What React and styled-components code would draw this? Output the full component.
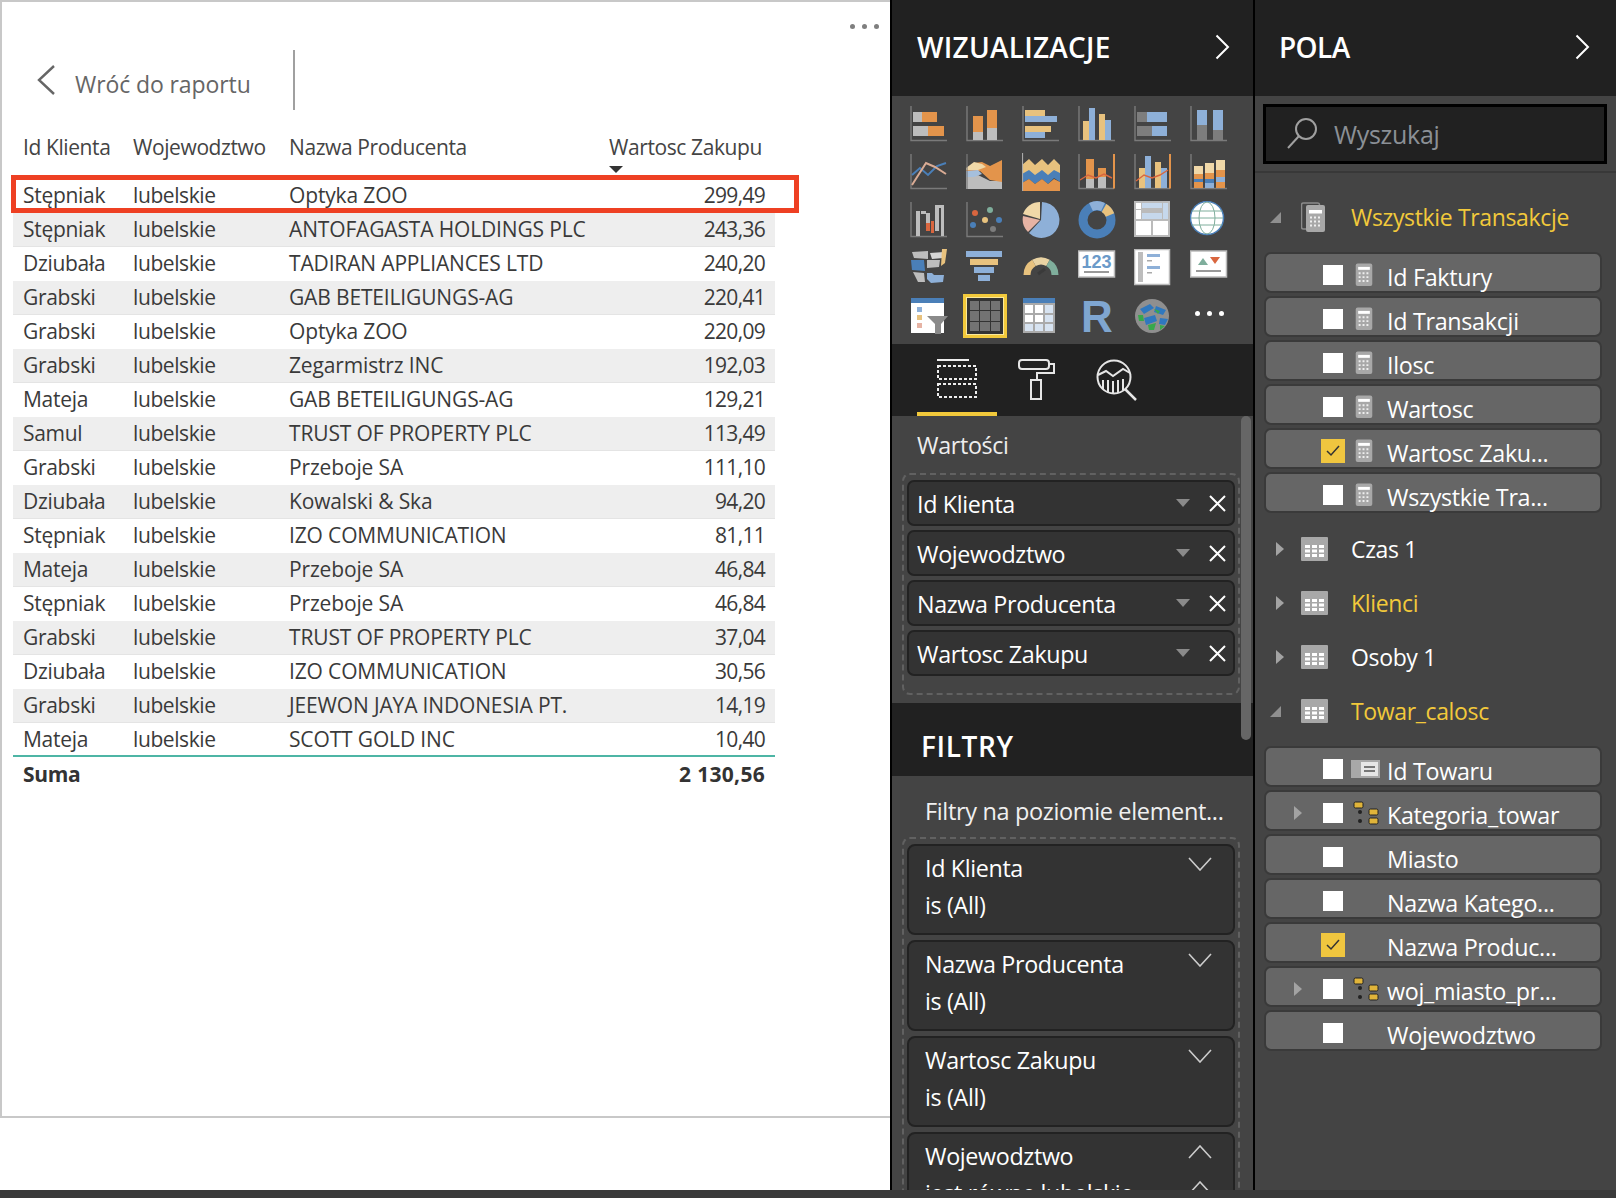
import React from 'react'
import styled, { createGlobalStyle } from 'styled-components'

const GlobalStyle = createGlobalStyle`
  html, body { margin: 0; padding: 0; background: #fff; }
  * { box-sizing: border-box; }
`

const FONT = `"Open Sans", "Noto Sans", sans-serif`
const OR = '#e3944b', LG = '#bdbdbd', BL = '#8eb0d8', TN = '#e8c27e', DB = '#4a7fb8', DG = '#7d7d7d', AX = '#7a7a7a', RD = '#d9663f', GR = '#7fae9c', PK = '#e6b3a4', WH = '#fff'

const rows = [
  ['Stępniak', 'Optyka ZOO', '299,49'],
  ['Stępniak', 'ANTOFAGASTA HOLDINGS PLC', '243,36'],
  ['Dziubała', 'TADIRAN APPLIANCES LTD', '240,20'],
  ['Grabski', 'GAB BETEILIGUNGS-AG', '220,41'],
  ['Grabski', 'Optyka ZOO', '220,09'],
  ['Grabski', 'Zegarmistrz INC', '192,03'],
  ['Mateja', 'GAB BETEILIGUNGS-AG', '129,21'],
  ['Samul', 'TRUST OF PROPERTY PLC', '113,49'],
  ['Grabski', 'Przeboje SA', '111,10'],
  ['Dziubała', 'Kowalski & Ska', '94,20'],
  ['Stępniak', 'IZO COMMUNICATION', '81,11'],
  ['Mateja', 'Przeboje SA', '46,84'],
  ['Stępniak', 'Przeboje SA', '46,84'],
  ['Grabski', 'TRUST OF PROPERTY PLC', '37,04'],
  ['Dziubała', 'IZO COMMUNICATION', '30,56'],
  ['Grabski', 'JEEWON JAYA INDONESIA PT.', '14,19'],
  ['Mateja', 'SCOTT GOLD INC', '10,40'],
]

const Page = styled.div`
  width: 1616px;
  height: 1198px;
  overflow: hidden;
  display: flex;
  flex-direction: column;
  font-family: ${FONT};
  background: #fff;
`
const Main = styled.div`
  flex: 1;
  display: flex;
  min-height: 0;
`
const BottomStrip = styled.div`
  height: 8px;
  background: #3a3a3a;
`

/* report */
const Report = styled.div`
  width: 890px;
  background: #fff;
`
const Canvas = styled.div`
  height: 1118px;
  border-top: 2px solid #c8c8c8;
  border-left: 2px solid #c8c8c8;
  border-bottom: 2px solid #c8c8c8;
`
const Dots = styled.div`
  height: 48px;
  display: flex;
  justify-content: flex-end;
  align-items: center;
  gap: 7px;
  padding-right: 11px;
`
const Dot = styled.span`
  width: 5px;
  height: 5px;
  border-radius: 50%;
  background: ${p => p.$color || '#7f7f7f'};
`
const BackRow = styled.div`
  height: 60px;
  display: flex;
  align-items: center;
  padding-left: 35px;
`
const BackLabel = styled.div`
  width: 218px;
  margin-left: 20px;
  font-size: 23px;
  letter-spacing: -0.1px;
  color: #666;
  padding-top: 8px;
`
const BackDivider = styled.div`
  width: 2px;
  height: 60px;
  background: #a0a0a0;
`
const TableWrap = styled.div`
  position: relative;
  width: 762px;
  margin: 18px 0 0 11px;
  font-size: 21px;
  letter-spacing: -0.3px;
  color: #3a3a3a;
`
const cols = `110px 156px 1fr 120px`
const HeadRow = styled.div`
  height: 51px;
  display: grid;
  grid-template-columns: 110px 156px 1fr 176px;
  padding-top: 3px;
  color: #444;
  letter-spacing: -0.4px;
`
const HeadCell = styled.div`
  padding-left: 10px;
  line-height: 32px;
`
const SortCaret = styled.div`
  width: 0;
  height: 0;
  margin-top: 3px;
  border-left: 7px solid transparent;
  border-right: 7px solid transparent;
  border-top: 7px solid #333;
`
const Row = styled.div`
  height: 33px;
  margin-bottom: 1px;
  padding-bottom: 2px;
  display: grid;
  grid-template-columns: ${cols};
  align-items: center;
  background: ${p => (p.$alt ? '#eeeeee' : '#fff')};
  box-shadow: 0 1px 0 ${p => (p.$alt ? '#e4e4e4' : '#fff')};
`
const TotalRow = styled(Row)`
  margin: -2px 0 0;
  height: 38px;
  position: relative;
  border-top: 2px solid #4db5a5;
  box-shadow: none;
  font-weight: 700;
  font-size: 21px;
  color: #333;
`
const Cell = styled.div`
  padding: 0 10px;
  white-space: nowrap;
  letter-spacing: ${p => p.$spacing ?? -0.3}px;
  text-align: ${p => (p.$right ? 'right' : 'left')};
`
const Highlight = styled.div`
  position: absolute;
  left: -2px;
  top: 47px;
  width: 788px;
  height: 38px;
  border: 5px solid #ee4023;
`

/* shared pane parts */
const Pane = styled.div`
  position: relative;
  overflow: hidden;
  background: #444;
  color: #fff;
  width: ${p => p.$w}px;
  border-left: ${p => (p.$border ? '2px solid #000' : '0')};
  border-right: ${p => (p.$border ? '2px solid #000' : '0')};
`
const PaneHeader = styled.div`
  height: 96px;
  padding-bottom: 3px;
  background: #212121;
  display: flex;
  align-items: center;
  justify-content: space-between;
  font-size: 28px;
  font-weight: 600;
  letter-spacing: ${p => p.$spacing}px;
  padding-left: ${p => p.$left}px;
  padding-right: ${p => p.$right}px;
`

/* visualizations */
const VizGrid = styled.div`
  height: 248px;
  padding: 9px 0 0 18px;
  display: grid;
  grid-template-columns: repeat(6, 56px);
  grid-auto-rows: 48px;
  align-items: start;
`
const Selected = styled.div`
  width: 44px;
  height: 44px;
  margin: -3px 0 0 -3px;
  border: 3px solid #f2c93b;
  outline: 1px solid #fbe99b;
  outline-offset: -4px;
  background: #333;
  padding: 4px;
  display: grid;
  grid-template-columns: repeat(3, 1fr);
  gap: 1px;
`
const SelectedCell = styled.div`
  background: #737373;
`
const MoreDots = styled.div`
  width: 38px;
  height: 32px;
  display: flex;
  align-items: center;
  justify-content: center;
  gap: 7px;
`
const Tabs = styled.div`
  height: 72px;
  background: #212121;
  display: flex;
  padding-left: 25px;
`
const Tab = styled.div`
  width: 80px;
  height: 72px;
  display: flex;
  justify-content: center;
  padding-top: 15px;
  border-bottom: 4px solid ${p => (p.$active ? '#f2c93b' : 'transparent')};
`
const Section = styled.div`
  height: 287px;
  padding-top: 13px;
`
const WellLabel = styled.div`
  margin-left: 25px;
  font-size: 23.3px;
  line-height: 32px;
  letter-spacing: -0.35px;
  color: #eee;
`
const Well = styled.div`
  width: 338px;
  margin: ${p => p.$top}px 0 0 10px;
  padding: 5px 3px 0;
  height: ${p => (p.$h ? `${p.$h}px` : 'auto')};
  border: 2px dashed #616161;
  border-radius: 8px;
`
const Pill = styled.div`
  height: 46px;
  margin-bottom: 4px;
  display: flex;
  align-items: center;
  padding: 0 7px 0 8px;
  background: #333;
  border: 2px solid #222;
  border-radius: 7px;
  font-size: 23.3px;
  letter-spacing: -0.35px;
`
const PillText = styled.span`
  flex: 1;
  padding-top: 2px;
`
const PillCaret = styled.span`
  width: 0;
  height: 0;
  margin-right: 19px;
  border-left: 7px solid transparent;
  border-right: 7px solid transparent;
  border-top: 8px solid #8a8a8a;
`
const FilterHeader = styled.div`
  height: 73px;
  background: #212121;
  display: flex;
  align-items: center;
  padding: 12px 0 0 29px;
  font-size: 28px;
  font-weight: 600;
  letter-spacing: 0.6px;
`
const FilterLevel = styled.div`
  margin: 19px 0 0 33px;
  font-size: 23.5px;
  line-height: 32px;
  letter-spacing: -0.35px;
  color: #f0f0f0;
  white-space: nowrap;
`
const FilterCard = styled.div`
  position: relative;
  height: ${p => p.$h || 91}px;
  margin-bottom: 5px;
  padding: 4px 0 0 16px;
  background: #333;
  border: 2px solid #222;
  border-radius: 8px;
  font-size: 23.3px;
  letter-spacing: -0.35px;
  line-height: 37px;
`
const CardChevron = styled.svg`
  position: absolute;
  right: 21px;
  top: ${p => p.$top}px;
`
const Scrollbar = styled.div`
  position: absolute;
  left: 349px;
  top: 416px;
  width: 10px;
  height: 324px;
  border-radius: 5px;
  background: #666;
`

/* fields */
const SearchBox = styled.div`
  width: 344px;
  height: 60px;
  margin: 8px 0 0 8px;
  display: flex;
  align-items: center;
  gap: 17px;
  padding-left: 21px;
  background: #212121;
  border: 3px solid #000;
  color: #8b9096;
  font-size: 25px;
  letter-spacing: -0.3px;
`
const PaneDivider = styled.div`
  height: 2px;
  margin-top: 7px;
  background: #383838;
`
const Tree = styled.div`
  padding-top: 17px;
`
const GroupHead = styled.div`
  height: 54px;
  display: grid;
  grid-template-columns: 31px 50px 1fr;
  align-items: center;
  padding-left: 15px;
  font-size: 23px;
  letter-spacing: -0.35px;
  color: ${p => (p.$active ? '#f2c93b' : '#fff')};
`
const FieldList = styled.div`
  margin: 8px 0 9px 9px;
`
const FieldRow = styled.div`
  width: 338px;
  height: 41px;
  margin-bottom: 3px;
  padding-top: 4px;
  display: grid;
  grid-template-columns: 57px 20px 44px 1fr;
  align-items: center;
  background: #666;
  border: 2px solid #3a3a3a;
  border-radius: 7px;
  font-size: 23.3px;
  letter-spacing: -0.3px;
`
const CheckSlot = styled.div`
  width: ${p => (p.$on ? 24 : 20)}px;
  height: ${p => (p.$on ? 24 : 20)}px;
  margin-left: ${p => (p.$on ? -2 : 0)}px;
  display: flex;
  align-items: center;
  justify-content: center;
  background: ${p => (p.$on ? '#f0c63f' : '#fff')};
`
const RowTriangle = styled.span`
  justify-self: end;
  margin-right: 21px;
  width: 0;
  height: 0;
  border-top: 7px solid transparent;
  border-bottom: 7px solid transparent;
  border-left: 8px solid #a3a3a3;
`
const FieldIconSlot = styled.div`
  display: flex;
  align-items: center;
  padding-left: ${p => p.$pad}px;
`
const FieldText = styled.span`
  align-self: start;
  padding-top: 4px;
  height: 33px;
  line-height: 30px;
  white-space: nowrap;
`
const HeadTriangle = styled.span`
  width: 0;
  height: 0;
  ${p => (p.$open
    ? `border-bottom: 11px solid #8f8f8f; border-left: 11px solid transparent;`
    : `margin-left: 6px; border-top: 7px solid transparent; border-bottom: 7px solid transparent; border-left: 8px solid #a3a3a3;`)}
`

/* bar and area icons described as data: [x, y, w, h, colour] */
const Axis = () => <path d="M1 1V35.5H37" fill="none" stroke={AX} strokeWidth="1.4" />
const Bars = ({ list }) => list.map((b, i) => <rect key={i} x={b[0]} y={b[1]} width={b[2]} height={b[3]} fill={b[4]} />)
const Icon = ({ children, w = 38, h = 38 }) => <svg width={w} height={h} viewBox={`0 0 ${w} ${h}`}>{children}</svg>

const chart = list => <Icon><Axis /><Bars list={list} /></Icon>

const vizIcons = [
  chart([[3, 7, 9, 10, LG], [12, 7, 15, 10, OR], [3, 21, 15, 10, LG], [18, 21, 16, 10, OR]]),
  chart([[7, 11, 10, 16, OR], [7, 27, 10, 8, LG], [21, 5, 10, 18, OR], [21, 23, 10, 12, LG]]),
  chart([[3, 5, 20, 6, TN], [3, 11, 32, 6, BL], [3, 21, 26, 6, TN], [3, 27, 20, 6, BL]]),
  chart([[5, 16, 6, 19, TN], [11, 3, 6, 32, BL], [21, 9, 6, 26, TN], [27, 15, 6, 20, BL]]),
  chart([[3, 7, 10, 10, DG], [13, 7, 20, 10, BL], [3, 21, 15, 10, DG], [18, 21, 15, 10, BL]]),
  chart([[7, 5, 10, 15, BL], [7, 20, 10, 15, DG], [23, 5, 10, 20, BL], [23, 25, 10, 10, DG]]),

  <Icon>
    <Axis />
    <path d="M2 22L10 15L18 22L27 13L36 10" fill="none" stroke={DB} strokeWidth="2" />
    <path d="M2 32L16 10L25 14L36 21" fill="none" stroke="#d9ab94" strokeWidth="2" />
  </Icon>,
  <Icon>
    <path d="M0 36V24L12 22L24 28L36 28V36Z" fill={LG} />
    <path d="M0 16L8 10L16 9L24 13L36 7V29L24 27L14 18L0 18Z" fill={OR} />
    <path d="M0 15L8 9L16 11L20 14L12 17L0 17Z" fill="#f0d8a8" />
    <path d="M0 18L12 17L16 21L8 24L0 24Z" fill="#a5bfdc" />
    <path d="M1 1V36" stroke={AX} strokeWidth="1.2" />
  </Icon>,
  <Icon>
    <path d="M0 12L7 6L13 12L20 6L26 12L32 6L38 12V24L32 20L26 25L20 20L13 26L7 20L0 24Z" fill={TN} />
    <path d="M0 21L7 17L13 22L20 17L26 22L32 17L38 20V29L32 25L26 31L20 26L13 31L7 26L0 30Z" fill={DB} />
    <path d="M0 30L7 26L13 31L20 26L26 31L32 26L38 29V38H0Z" fill={OR} />
    <path d="M0.5 0V38" stroke="#aaa" strokeWidth="1.2" />
  </Icon>,
  <Icon>
    <path d="M1 1V35.5H36" fill="none" stroke={AX} strokeWidth="1.4" />
    <path d="M36 1V35.5" stroke={OR} strokeWidth="2" />
    <Bars list={[[8, 6, 8, 20, OR], [8, 26, 8, 9, LG], [20, 15, 8, 9, OR], [20, 24, 8, 11, LG]]} />
    <path d="M2 27L10 22L18 25L26 21L34 25" fill="none" stroke={RD} strokeWidth="1.4" />
  </Icon>,
  <Icon>
    <path d="M1 1V35.5H36" fill="none" stroke={AX} strokeWidth="1.4" />
    <path d="M36 1V35.5" stroke={OR} strokeWidth="2" />
    <Bars list={[[5, 15, 6, 20, TN], [11, 3, 6, 32, BL], [21, 9, 6, 26, TN], [27, 15, 6, 20, BL]]} />
    <path d="M2 28L10 22L18 25L26 22L34 17" fill="none" stroke={RD} strokeWidth="1.4" />
  </Icon>,
  <Icon>
    <path d="M1 1V35.5H37" fill="none" stroke={AX} strokeWidth="1.4" />
    <Bars list={[[4, 13, 9, 8, '#f0d8a8'], [15, 10, 9, 10, '#f0d8a8'], [26, 7, 9, 10, '#f0d8a8'], [4, 21, 9, 5, OR], [15, 20, 9, 6, OR], [26, 17, 9, 7, OR], [4, 26, 9, 3, DB], [15, 26, 9, 4, DB], [26, 24, 9, 5, BL], [4, 29, 9, 6, OR], [15, 30, 9, 5, BL], [26, 29, 9, 6, OR]]} />
  </Icon>,

  <Icon>
    <Axis />
    <Bars list={[[6, 10, 4, 25, LG], [11, 10, 5, 3, LG], [16, 12, 4, 10, LG], [16, 22, 4, 8, RD], [21, 20, 3, 12, RD], [25, 4, 4, 26, LG], [29, 4, 4, 3, LG], [31, 4, 3, 31, LG]]} />
  </Icon>,
  <Icon>
    <Axis />
    <circle cx="9" cy="12" r="3" fill={RD} />
    <circle cx="24" cy="9" r="3" fill={GR} />
    <circle cx="19" cy="19" r="3" fill={TN} />
    <circle cx="7" cy="24" r="3" fill={DB} />
    <circle cx="33" cy="19" r="3" fill={DB} />
    <circle cx="27" cy="28" r="3" fill={DG} />
  </Icon>,
  <Icon>
    <path d="M19 19L20 1A18 18 0 1 1 7 32Z" fill={BL} />
    <path d="M18 18L1 13A18 18 0 0 1 18 1Z" fill="#f0d8a8" />
    <path d="M18 19L6 31A18 18 0 0 1 1 15Z" fill={PK} />
  </Icon>,
  <Icon>
    <circle cx="19" cy="19" r="14" fill="none" stroke={DB} strokeWidth="9" />
    <path d="M13 6A14 14 0 0 1 25 6" fill="none" stroke={BL} strokeWidth="9" />
    <path d="M26 7A14 14 0 0 1 32 14" fill="none" stroke={TN} strokeWidth="9" />
  </Icon>,
  <Icon>
    <rect width="36" height="36" fill="#bbb" />
    <Bars list={[[2, 2, 5, 6, WH], [8, 2, 20, 5, '#c6d8ec'], [29, 2, 5, 16, '#c6d8ec'], [2, 9, 5, 9, WH], [8, 12, 20, 6, '#c6d8ec'], [2, 20, 15, 14, WH], [19, 20, 15, 14, WH]]} />
  </Icon>,
  <Icon>
    <circle cx="17" cy="17" r="16.5" fill="#fff" stroke={DB} strokeWidth="1.5" />
    <ellipse cx="17" cy="17" rx="8" ry="16" fill="none" stroke={GR} />
    <path d="M2 10H32M1 17H33M2 24H32" stroke={GR} />
  </Icon>,

  <Icon>
    <path d="M2 3L18 2L18 10L4 9Z" fill={LG} />
    <path d="M20 4L34 3L33 9L22 10Z" fill="#d5d5d5" />
    <path d="M32 0H37L35 14L31 17Z" fill={TN} />
    <path d="M1 11H14L15 22L2 21Z" fill={DB} />
    <path d="M17 11H30L29 18L17 19Z" fill={LG} />
    <path d="M3 23L14 24L15 33L8 33Z" fill={LG} />
    <path d="M17 24H22L24 26H34L33 33L21 34L17 30Z" fill={BL} />
  </Icon>,
  <Icon>
    <Bars list={[[0, 2, 36, 6, BL], [4, 10, 28, 6, TN], [8, 18, 20, 6, BL], [12, 26, 12, 6, BL]]} />
  </Icon>,
  <Icon>
    <g fill="none" strokeWidth="7">
      <path d="M5 26A14 14 0 0 1 12 13.9" stroke={TN} />
      <path d="M12 13.9A14 14 0 0 1 26 13.9" stroke="#e9d3a3" />
      <path d="M26 13.9A14 14 0 0 1 33 26" stroke={GR} />
    </g>
    <path d="M16 25L23 20" stroke="#3a3a3a" strokeWidth="3" />
  </Icon>,
  <Icon>
    <rect x="0.5" y="2" width="36" height="26" fill="#fff" stroke="#bbb" strokeWidth="1.5" />
    <text x="18.5" y="19" textAnchor="middle" fontSize="18" fontWeight="700" fontFamily="Liberation Sans" fill="#6a9ac9">123</text>
    <rect x="6" y="22" width="25" height="2" fill="#999" />
  </Icon>,
  <Icon>
    <rect x="0.5" y="0.5" width="35" height="35" fill="#fff" stroke="#bbb" strokeWidth="1.5" />
    <Bars list={[[4, 3, 5, 30, LG], [13, 5, 13, 3, BL], [13, 11, 5, 1.5, '#aaa'], [13, 17, 13, 3, BL], [13, 23, 5, 1.5, '#aaa']]} />
  </Icon>,
  <Icon>
    <rect x="0.5" y="2" width="36" height="26" fill="#fff" stroke="#bbb" strokeWidth="1.5" />
    <path d="M8 16L13 9L18 16Z" fill={GR} />
    <path d="M20 8H30L25 15Z" fill={RD} />
    <rect x="6" y="21" width="25" height="2" fill="#999" />
  </Icon>,

  <Icon>
    <rect x="1" y="1" width="33" height="35" fill="#fff" />
    <rect x="1" y="1" width="33" height="5" fill={DB} />
    <Bars list={[[7, 10, 5, 5, BL], [7, 18, 5, 5, TN], [7, 26, 5, 5, PK]]} />
    <path d="M17 19H38L31 27V37H25V27Z" fill="#8a8a8a" />
  </Icon>,
  <Selected>{Array.from({ length: 9 }, (_, i) => <SelectedCell key={i} />)}</Selected>,
  <Icon>
    <rect x="1" y="1" width="32" height="35" fill="#aaa" />
    <rect x="1" y="1" width="32" height="5" fill={DB} />
    <Bars list={[[3, 8, 8, 8, WH], [13, 8, 8, 8, WH], [23, 8, 8, 8, '#d7e3f1'], [3, 18, 8, 7, WH], [13, 18, 8, 7, WH], [23, 18, 8, 7, '#d7e3f1'], [3, 27, 8, 7, '#d7e3f1'], [13, 27, 8, 7, '#d7e3f1'], [23, 27, 8, 7, '#d7e3f1']]} />
  </Icon>,
  <Icon>
    <text x="19" y="35" textAnchor="middle" fontSize="44" fontWeight="700" fontFamily="Liberation Sans" fill="#7fa6d0">R</text>
  </Icon>,
  <Icon>
    <circle cx="18" cy="19" r="17" fill="#8f8f8f" />
    <path d="M6 12L16 7L20 11L10 17ZM22 9L32 13L29 18L20 15ZM10 21L21 18L23 24L12 28ZM26 21L34 22L31 28L25 27Z" fill="#2f78bf" />
    <path d="M4 18L9 18L10 24L5 24ZM20 12L26 14L24 17ZM14 28L22 26L20 33L15 33ZM26 28L31 29L26 33Z" fill="#37a84b" />
  </Icon>,
  <MoreDots><Dot $color="#fff" /><Dot $color="#fff" /><Dot $color="#fff" /></MoreDots>,
]

const Chevron = () => (
  <svg width="15" height="26" viewBox="0 0 15 26"><path d="M1.5 1.5L13 13L1.5 24.5" fill="none" stroke="#fff" strokeWidth="2" /></svg>
)
const Close = () => (
  <svg width="17" height="17" viewBox="0 0 17 17"><path d="M1 1L16 16M16 1L1 16" stroke="#fff" strokeWidth="2" /></svg>
)
const Calc = ({ size = 18 }) => (
  <svg width={size} height={size * 1.3} viewBox="0 0 18 24">
    <rect x="0.5" y="0.5" width="17" height="23" rx="2" fill="#a8a8a8" />
    <rect x="3" y="4" width="12" height="3" fill="#fff" />
    <path d="M3.5 10.5H14.5M3.5 14.5H14.5M3.5 18.5H14.5" stroke="#eee" strokeWidth="2" strokeDasharray="2 2" />
  </svg>
)
const CalcStack = () => (
  <svg width="25" height="30" viewBox="0 0 25 30">
    <rect x="0.5" y="1" width="18" height="26" rx="2" fill="none" stroke="#8a8a8a" strokeWidth="1.5" />
    <rect x="5" y="3" width="19" height="27" rx="2" fill="#a8a8a8" />
    <rect x="8" y="8" width="13" height="3.5" fill="#fff" />
    <path d="M9 15.5H20M9 19.5H20M9 23.5H20" stroke="#eee" strokeWidth="2" strokeDasharray="2 2" />
  </svg>
)
const TableIcon = () => (
  <svg width="27" height="24" viewBox="0 0 27 24">
    <rect width="27" height="24" rx="1" fill="#a8a8a8" />
    <path d="M4 9.5H23M4 14H23M4 18.5H23" stroke="#fff" strokeWidth="3" strokeDasharray="5 2" />
  </svg>
)
const IdIcon = () => (
  <svg width="29" height="18" viewBox="0 0 29 18">
    <rect width="29" height="18" fill="#a8a8a8" />
    <rect x="10" y="2" width="17" height="14" fill="#e6e6e6" />
    <path d="M13 7H24M13 11H24" stroke="#777" strokeWidth="2" />
  </svg>
)
const Hierarchy = () => (
  <svg width="26" height="24" viewBox="0 0 26 24">
    <rect x="1" y="1" width="9" height="6" rx="1.5" fill="#e0b43a" stroke="#222" />
    <rect x="16" y="8" width="9" height="6" rx="1.5" fill="#e0b43a" stroke="#222" />
    <rect x="16" y="17" width="9" height="6" rx="1.5" fill="#e0b43a" stroke="#222" />
    <circle cx="7" cy="11" r="2" fill="#222" />
    <circle cx="7" cy="20" r="2" fill="#222" />
  </svg>
)
const Tick = () => (
  <svg width="14" height="12" viewBox="0 0 14 12"><path d="M1 6L5 10L13 1" fill="none" stroke="#333" strokeWidth="1.5" /></svg>
)
const FieldsTab = () => (
  <svg width="40" height="42" viewBox="0 0 40 42" fill="none" stroke="#eee">
    <path d="M0 1H32" strokeWidth="2" />
    <rect x="1" y="7" width="38" height="13" strokeWidth="2" strokeDasharray="3 2" />
    <rect x="1" y="25" width="38" height="13" strokeWidth="2" strokeDasharray="3 2" />
  </svg>
)
const FormatTab = () => (
  <svg width="38" height="42" viewBox="0 0 38 42" fill="none" stroke="#e6e6e6" strokeWidth="2">
    <rect x="1" y="1" width="30" height="9" rx="3" />
    <path d="M31 5H36V14H19V21" />
    <rect x="13" y="21" width="10" height="19" />
  </svg>
)
const AnalyticsTab = () => (
  <svg width="42" height="42" viewBox="0 0 42 42" fill="none" stroke="#e6e6e6" strokeWidth="2">
    <circle cx="18" cy="18" r="16.5" />
    <path d="M2 16L10 12L17 17L27 10L34 14" />
    <path d="M7 21V30M12 21V33M17 22V34M22 21V34M27 20V31" />
    <path d="M29 30L40 41" strokeWidth="2.5" />
  </svg>
)
const SearchIcon = () => (
  <svg width="30" height="32" viewBox="0 0 30 32" fill="none" stroke="#a0a0a0" strokeWidth="2">
    <circle cx="19" cy="11" r="10" />
    <path d="M12 18L1 30" />
  </svg>
)
const Down = () => <path d="M1 1L12 13L23 1" fill="none" stroke="#ccc" strokeWidth="1.6" />
const Up = () => <path d="M1 13L12 1L23 13" fill="none" stroke="#ccc" strokeWidth="1.6" />

const wells = ['Id Klienta', 'Wojewodztwo', 'Nazwa Producenta', 'Wartosc Zakupu']
const filters = ['Id Klienta', 'Nazwa Producenta', 'Wartosc Zakupu']

const measures = ['Id Faktury', 'Id Transakcji', 'Ilosc', 'Wartosc', 'Wartosc Zaku...', 'Wszystkie Tra...']
const towar = [
  { name: 'Id Towaru', icon: 'id' },
  { name: 'Kategoria_towar', icon: 'tree' },
  { name: 'Miasto' },
  { name: 'Nazwa Katego...' },
  { name: 'Nazwa Produc...', on: true },
  { name: 'woj_miasto_pr...', icon: 'tree' },
  { name: 'Wojewodztwo' },
]

const Field = ({ name, icon, on }) => (
  <FieldRow>
    {icon === 'tree' ? <RowTriangle /> : <span />}
    <CheckSlot $on={on}>{on && <Tick />}</CheckSlot>
    <FieldIconSlot $pad={icon === 'id' ? 8 : icon === 'tree' ? 10 : 12}>
      {icon === 'calc' && <Calc />}
      {icon === 'id' && <IdIcon />}
      {icon === 'tree' && <Hierarchy />}
    </FieldIconSlot>
    <FieldText>{name}</FieldText>
  </FieldRow>
)

const App = () => (
  <Page>
    <GlobalStyle />
    <Main>
      <Report>
        <Canvas>
          <Dots><Dot /><Dot /><Dot /></Dots>
          <BackRow>
            <svg width="18" height="30" viewBox="0 0 18 30"><path d="M17 1L2 15L17 29" fill="none" stroke="#666" strokeWidth="2.4" /></svg>
            <BackLabel>Wróć do raportu</BackLabel>
            <BackDivider />
          </BackRow>
          <TableWrap>
            <HeadRow>
              <HeadCell>Id Klienta</HeadCell>
              <HeadCell>Wojewodztwo</HeadCell>
              <HeadCell>Nazwa Producenta</HeadCell>
              <HeadCell>Wartosc Zakupu<SortCaret /></HeadCell>
            </HeadRow>
            {rows.map((r, i) => (
              <Row key={i} $alt={i % 2 === 1}>
                <Cell>{r[0]}</Cell>
                <Cell $spacing={-0.4}>lubelskie</Cell>
                <Cell $spacing={-0.15}>{r[1]}</Cell>
                <Cell $right $spacing={-0.7}>{r[2]}</Cell>
              </Row>
            ))}
            <TotalRow>
              <Cell>Suma</Cell>
              <Cell />
              <Cell />
              <Cell $right $spacing={0.3}>2 130,56</Cell>
            </TotalRow>
            <Highlight />
          </TableWrap>
        </Canvas>
      </Report>

      <Pane $w={365} $border>
        <PaneHeader $left={25} $right={23} $spacing={0.25}>WIZUALIZACJE<Chevron /></PaneHeader>
        <VizGrid>
          {vizIcons.map((icon, i) => <div key={i}>{icon}</div>)}
        </VizGrid>
        <Tabs>
          <Tab $active><FieldsTab /></Tab>
          <Tab><FormatTab /></Tab>
          <Tab><AnalyticsTab /></Tab>
        </Tabs>
        <Section>
          <WellLabel>Wartości</WellLabel>
          <Well $top={12} $h={222}>
            {wells.map(w => (
              <Pill key={w}>
                <PillText>{w}</PillText>
                <PillCaret />
                <Close />
              </Pill>
            ))}
          </Well>
        </Section>
        <FilterHeader>FILTRY</FilterHeader>
        <FilterLevel>Filtry na poziomie element...</FilterLevel>
        <Well $top={10}>
          {filters.map(f => (
            <FilterCard key={f}>
              {f}<br />is (All)
              <CardChevron $top={11} width="24" height="14" viewBox="0 0 24 14"><Down /></CardChevron>
            </FilterCard>
          ))}
          <FilterCard $h={120}>
            Wojewodztwo<br />jest równe lubelskie
            <CardChevron $top={11} width="24" height="14" viewBox="0 0 24 14"><Up /></CardChevron>
            <CardChevron $top={47} width="24" height="14" viewBox="0 0 24 14"><Up /></CardChevron>
          </FilterCard>
        </Well>
        <Scrollbar />
      </Pane>

      <Pane $w={361}>
        <PaneHeader $left={24} $right={26} $spacing={-0.6}>POLA<Chevron /></PaneHeader>
        <SearchBox><SearchIcon />Wyszukaj</SearchBox>
        <PaneDivider />
        <Tree>
          <GroupHead $active><HeadTriangle $open /><CalcStack /><span>Wszystkie Transakcje</span></GroupHead>
          <FieldList>
            {measures.map(m => <Field key={m} name={m} icon="calc" on={m === 'Wartosc Zaku...'} />)}
          </FieldList>
          <GroupHead><HeadTriangle /><TableIcon /><span>Czas 1</span></GroupHead>
          <GroupHead $active><HeadTriangle /><TableIcon /><span>Klienci</span></GroupHead>
          <GroupHead><HeadTriangle /><TableIcon /><span>Osoby 1</span></GroupHead>
          <GroupHead $active><HeadTriangle $open /><TableIcon /><span>Towar_calosc</span></GroupHead>
          <FieldList>
            {towar.map(f => <Field key={f.name} {...f} />)}
          </FieldList>
        </Tree>
      </Pane>
    </Main>
    <BottomStrip />
  </Page>
)

export default App
